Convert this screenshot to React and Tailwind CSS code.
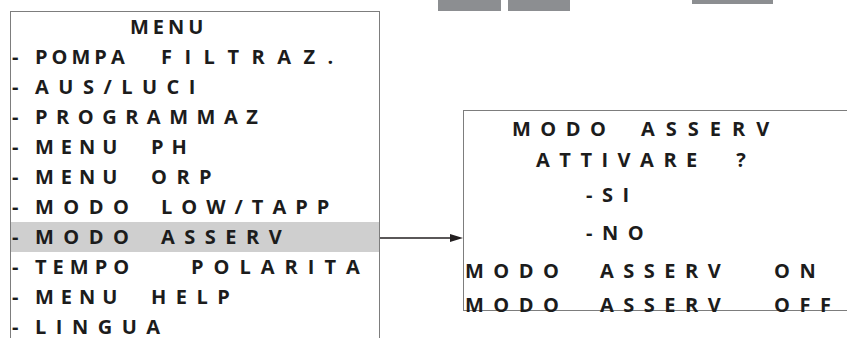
// [first word, its tracking, width of its cell, second word, its tracking]
const menuRows = [
  ["POMPA", "tracking-[4px]", 126, "FILTRAZ.", "tracking-[12.5px]"],
  ["AUS/LUCI", "tracking-[9.5px]", 0, "", ""],
  ["PROGRAMMAZ", "tracking-[8.5px]", 0, "", ""],
  ["MENU", "tracking-[7px]", 116, "PH", "tracking-[8px]"],
  ["MENU", "tracking-[7px]", 116, "ORP", "tracking-[9.5px]"],
  ["MODO", "tracking-[9.5px]", 126, "LOW/TAPP", "tracking-[9px]"],
  ["MODO", "tracking-[9.5px]", 126, "ASSERV", "tracking-[9.5px]"],
  ["TEMPO", "tracking-[6px]", 156, "POLARITA", "tracking-[10px]"],
  ["MENU", "tracking-[7px]", 116, "HELP", "tracking-[9.5px]"],
  ["LINGUA", "tracking-[9.5px]", 0, "", ""],
];

const Arrow = () => (
  <svg width="83" height="10" viewBox="0 0 83 10" className="block">
    <line x1="0" y1="5" x2="72" y2="5" stroke="#231f20" strokeWidth="1.3" />
    <polygon points="70,1 83,5 70,9" fill="#231f20" />
  </svg>
);

export default function App() {
  const font = "font-['Open_Sans',sans-serif] font-bold text-[20px] whitespace-pre text-[#1c1c1c]";
  const wide = `${font} tracking-[9.5px]`;

  return (
    <div className="w-[847px] h-[338px] overflow-hidden bg-white flex">
      {/* Menu list */}
      <div className="ml-[10px] mt-[11px] w-[370px] h-[330px] shrink-0 border border-b-0 border-[#7d7d7d] flex flex-col">
        <div className={`h-[30px] shrink-0 flex items-center pl-[119px] ${font} tracking-[4px]`}>MENU</div>
        {menuRows.map(([first, t1, w, second, t2]) => (
          <div
            key={first + second}
            className={`h-[30px] shrink-0 flex items-center pl-[1px] ${font} ${second === "ASSERV" ? "bg-[#cfcfcf]" : ""}`}
          >
            <span className="w-[23px] shrink-0">-</span>
            <span className={`shrink-0 ${t1}`} style={w ? { width: w } : undefined}>{first}</span>
            {second && <span className={t2}>{second}</span>}
          </div>
        ))}
      </div>

      <div className="flex flex-col flex-1">
        {/* cut-off blocks at top */}
        <div className="h-[11px] flex items-start">
          <div className="ml-[58px] w-[63px] h-[11px] bg-[#8c8e91]" />
          <div className="ml-[7px] w-[62px] h-[11px] bg-[#8c8e91]" />
          <div className="ml-[122px] w-[81px] h-[4px] bg-[#8c8e91]" />
        </div>

        <div className="mt-[99px] flex items-start">
          <div className="mt-[123px] shrink-0">
            <Arrow />
          </div>
          <div className="w-[420px] h-[201px] shrink-0 border border-r-0 border-[#7d7d7d] flex flex-col">
            <div className={`mt-[3px] h-[30px] flex items-center pl-[48px] ${wide}`}>
              <span className="w-[129px] shrink-0">MODO</span>
              <span className="tracking-[11px]">ASSERV</span>
            </div>
            <div className={`mt-[1px] h-[30px] flex items-center pl-[72px] ${wide}`}>ATTIVARE  ?</div>
            <div className={`mt-[5px] h-[30px] flex items-center pl-[122px] ${wide}`}>
              <span className="w-[16px] shrink-0">-</span>
              <span>SI</span>
            </div>
            <div className={`mt-[8px] h-[30px] flex items-center pl-[122px] ${wide}`}>
              <span className="w-[16px] shrink-0">-</span>
              <span>NO</span>
            </div>
            <div className={`mt-[8px] h-[30px] flex items-center pl-[1px] ${wide}`}>
              <span className="w-[135px] shrink-0">MODO</span>
              <span className="w-[174px] shrink-0">ASSERV</span>
              <span>ON</span>
            </div>
            <div className={`mt-[4px] h-[30px] flex items-center pl-[1px] ${wide}`}>
              <span className="w-[135px] shrink-0">MODO</span>
              <span className="w-[174px] shrink-0">ASSERV</span>
              <span>OFF</span>
            </div>
          </div>
        </div>
      </div>
    </div>
  );
}
